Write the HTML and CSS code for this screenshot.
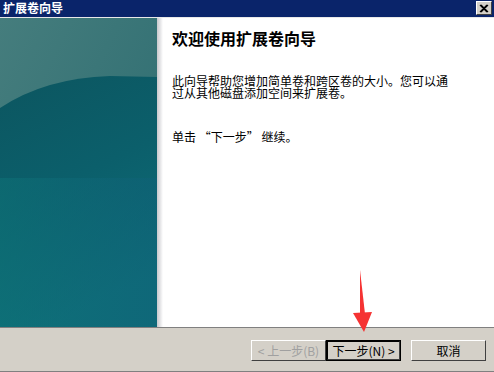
FILE: index.html
```html
<!DOCTYPE html>
<html lang="zh-CN">
<head>
    <meta charset="UTF-8">
    <title>扩展卷向导</title>
    <link rel="stylesheet" href="styles.css">
</head>
<body>
    <div class="window">
        <!-- Title bar -->
        <div class="titlebar">
            <span class="title">扩展卷向导</span>
            <span class="close-btn">
                <svg width="10" height="9" viewBox="0 0 10 9">
                    <path d="M1 1 L8 8 M2 1 L9 8 M8 1 L1 8 M9 1 L2 8" stroke="#000" stroke-width="1.2" fill="none"/>
                </svg>
            </span>
        </div>

        <!-- Wizard body -->
        <div class="wizard">
            <div class="banner">
                <svg class="banner-art" width="157" height="309" viewBox="0 0 157 309" preserveAspectRatio="none">
                    <defs>
                        <linearGradient id="topGrad" x1="0" y1="0" x2="1" y2="1">
                            <stop offset="0" stop-color="#457d7d"/>
                            <stop offset="1" stop-color="#2b6b70"/>
                        </linearGradient>
                        <linearGradient id="lowGrad" x1="0" y1="0" x2="0.3" y2="1">
                            <stop offset="0" stop-color="#0c5660"/>
                            <stop offset="0.5" stop-color="#0b5f6b"/>
                            <stop offset="1" stop-color="#0e6d78"/>
                        </linearGradient>
                        <linearGradient id="sideGrad" x1="0" y1="0" x2="1" y2="0">
                            <stop offset="0" stop-color="#0e7478" stop-opacity="0.5"/>
                            <stop offset="1" stop-color="#10607a" stop-opacity="0.4"/>
                        </linearGradient>
                    </defs>
                    <rect width="157" height="309" fill="url(#topGrad)"/>
                    <path d="M0 90 Q45 60 110 58 L157 59 L157 309 L0 309 Z" fill="url(#lowGrad)"/>
                    <rect y="160" width="157" height="149" fill="url(#sideGrad)"/>
                </svg>
            </div>
            <div class="banner-shade"></div>
            <div class="content">
                <h1>欢迎使用扩展卷向导</h1>
                <p class="intro">此向导帮助您增加简单卷和跨区卷的大小。您可以通过从其他磁盘添加空间来扩展卷。</p>
                <p class="hint">单击 “下一步” 继续。</p>
            </div>
        </div>

        <!-- Buttons -->
        <div class="footer">
            <button class="btn disabled">&lt; 上一步(B)</button>
            <button class="btn default">下一步(N) &gt;</button>
            <button class="btn cancel">取消</button>
        </div>

        <!-- Annotation arrow -->
        <svg class="arrow" width="24" height="62" viewBox="0 0 24 62">
            <path d="M9 0 L14 44 L9 44 Z" fill="#f53333"/>
            <path d="M2 43 L21 42 L13 62 Z" fill="#f53333"/>
        </svg>
    </div>
</body>
</html>
```

FILE: styles.css
```css
body, html {
    margin: 0;
    padding: 0;
    font-family: "Noto Sans CJK SC", "DejaVu Sans", sans-serif;
    font-size: 12px;
}

.window {
    position: relative;
    width: 494px;
    height: 372px;
    display: flex;
    flex-direction: column;
    background-color: #d4d0c8;
    overflow: hidden;
}

/* Title bar */
.titlebar {
    height: 17px;
    background-color: #0a246a;
    border-bottom: 1px solid #e8e8e8;
    display: flex;
    align-items: flex-start;
    justify-content: space-between;
    padding: 0 2px 0 2px;
    box-sizing: content-box;
}

.title {
    color: #fff;
    font-weight: bold;
    font-size: 12px;
    line-height: 16px;
    padding: 0 1px;
}

.close-btn {
    width: 14px;
    height: 12px;
    margin-top: 1px;
    background-color: #d4d0c8;
    border: 1px solid;
    border-color: #fff #404040 #404040 #fff;
    display: flex;
    align-items: center;
    justify-content: center;
}

/* Wizard area */
.wizard {
    height: 309px;
    display: flex;
    background-color: #fff;
}

.banner {
    width: 157px;
    height: 309px;
}

.banner-art {
    display: block;
}

.banner-shade {
    width: 6px;
    background: linear-gradient(to right, #c8c8cc, #e8e8ea 60%, #fff);
}

.content {
    padding-left: 9px;
    width: 285px;
}

.content h1 {
    font-size: 16px;
    font-weight: bold;
    margin: 10px 0 0 0;
    line-height: 20px;
    color: #000;
}

.intro {
    margin: 27px 0 0 0;
    line-height: 12px;
    color: #000;
}

.hint {
    margin: 31px 0 0 0;
    line-height: 14px;
    color: #000;
}

/* Footer */
.footer {
    flex: 1;
    border-top: 1px solid #808080;
    border-bottom: 1px solid #808080;
    display: flex;
    justify-content: flex-end;
    align-items: flex-start;
    padding: 12px 8px 0 0;
}

.btn {
    width: 75px;
    height: 21px;
    font-family: inherit;
    font-size: 12px;
    background-color: #d4d0c8;
    border: 1px solid;
    border-color: #fff #404040 #404040 #fff;
    padding: 0;
    line-height: 17px;
    color: #000;
}

.btn.disabled {
    color: #a0a0a0;
}

.btn.default {
    outline: 1px solid #000;
    outline-offset: -1px;
    border-width: 2px;
    border-color: #000 #404040 #404040 #000;
}

.btn.cancel {
    margin-left: 10px;
}

/* Red annotation arrow */
.arrow {
    position: absolute;
    left: 351px;
    top: 270px;
}
```
